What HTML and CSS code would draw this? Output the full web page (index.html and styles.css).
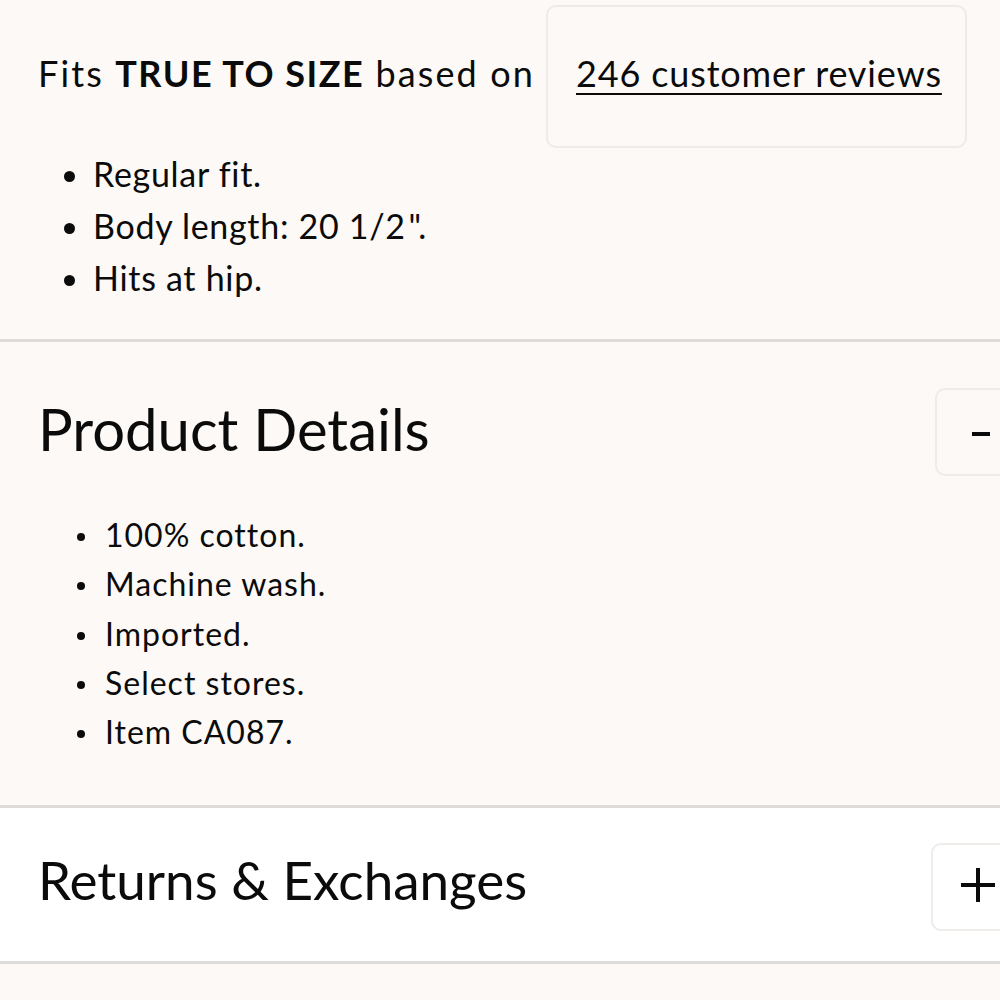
FILE: index.html
```html
<!DOCTYPE html>
<html lang="en">
<head>
<meta charset="utf-8">
<title>Product info</title>
<link rel="stylesheet" href="styles.css">
</head>
<body>
<div class="page">
  <section class="fit">
    <div class="fit-row">
      <p class="fit-text">Fits <strong>TRUE TO SIZE</strong> based on</p>
      <div class="review-box"><a href="#" class="review-link">246 customer reviews</a></div>
    </div>
    <ul class="fit-list">
      <li>Regular fit.</li>
      <li>Body length: 20 1/2&#8202;".</li>
      <li>Hits at hip.</li>
    </ul>
  </section>
  <section class="acc acc-open">
    <div class="acc-head">
      <h2 class="acc-title">Product Details</h2>
      <button class="acc-btn" aria-label="Collapse"><span class="minus"></span></button>
    </div>
    <ul class="detail-list">
      <li>100% cotton.</li>
      <li>Machine wash.</li>
      <li>Imported.</li>
      <li>Select stores.</li>
      <li>Item CA087.</li>
    </ul>
  </section>
  <section class="acc acc-closed">
    <div class="acc-head">
      <h2 class="acc-title">Returns &amp; Exchanges</h2>
      <button class="acc-btn" aria-label="Expand"><span class="plus"></span></button>
    </div>
  </section>
</div>
</body>
</html>
```
FILE: styles.css
```css
html, body {
  margin: 0;
  padding: 0;
  background: #fcf9f6;
  overflow: hidden;
}
body {
  font-family: Lato, "Noto Sans", sans-serif;
  color: #0b0b0b;
}
.page {
  width: 1000px;
}
.fit {
  padding: 5px 0 0 38px;
  height: 339px;
  box-sizing: border-box;
}
.fit-row {
  display: flex;
  align-items: center;
}
.fit-text {
  margin: 0 0 8px 0;
  font-size: 36px;
  letter-spacing: 2.1px;
  width: 508px;
  white-space: nowrap;
}
.fit-text strong {
  font-weight: 700;
  letter-spacing: 1.5px;
}
.review-box {
  width: 421px;
  height: 143px;
  box-sizing: border-box;
  border: 2px solid #eeebe8;
  border-radius: 10px;
  padding: 0 0 8px 28px;
  display: flex;
  align-items: center;
}
.review-link {
  color: #0b0b0b;
  font-size: 36px;
  letter-spacing: 0.85px;
  text-decoration: underline;
  text-decoration-thickness: 2px;
  text-underline-offset: 6px;
}
.fit-list {
  margin: 0;
  padding: 0 0 0 55px;
  font-size: 34px;
  letter-spacing: 0.7px;
}
.fit-list li {
  line-height: 52px;
}
.acc {
  border-top: 3px solid #dedcda;
}
.acc-head {
  display: flex;
  align-items: flex-start;
  justify-content: space-between;
  padding-left: 38px;
}
.acc-title {
  margin: 0;
  font-weight: 400;
  line-height: 1.2;
}
.acc-btn {
  width: 88px;
  height: 88px;
  border: 2px solid #eeebe8;
  border-radius: 10px;
  background: transparent;
  padding: 0;
  position: relative;
}
.acc-open .acc-head {
  height: 168px;
}
.acc-open .acc-title {
  font-size: 58px;
  margin-top: 52px;
}
.acc-open .acc-btn {
  margin-top: 46px;
  margin-right: -23px;
}
.minus {
  position: absolute;
  left: 35px;
  top: 42px;
  width: 18px;
  height: 4px;
  background: #0b0b0b;
}
.plus {
  position: absolute;
  left: 28px;
  top: 23px;
  width: 34px;
  height: 34px;
}
.plus::before, .plus::after {
  content: "";
  position: absolute;
  background: #0b0b0b;
}
.plus::before {
  left: 0;
  top: 15px;
  width: 34px;
  height: 4px;
}
.plus::after {
  left: 15px;
  top: 0;
  width: 4px;
  height: 34px;
}
.detail-list {
  margin: 0;
  padding: 0 0 49px 0;
  list-style: none;
  font-size: 32px;
  letter-spacing: 1px;
}
.detail-list li {
  line-height: 49.3px;
  padding-left: 105px;
  position: relative;
}
.detail-list li::before {
  content: "";
  position: absolute;
  left: 77px;
  top: 23px;
  width: 8px;
  height: 8px;
  border-radius: 50%;
  background: #0b0b0b;
}
.acc-closed {
  background: #ffffff;
  border-bottom: 3px solid #dedcda;
}
.acc-closed .acc-head {
  height: 153px;
}
.acc-closed .acc-title {
  font-size: 53px;
  margin-top: 40px;
}
.acc-closed .acc-btn {
  margin-top: 35px;
  margin-right: -19px;
}
```
